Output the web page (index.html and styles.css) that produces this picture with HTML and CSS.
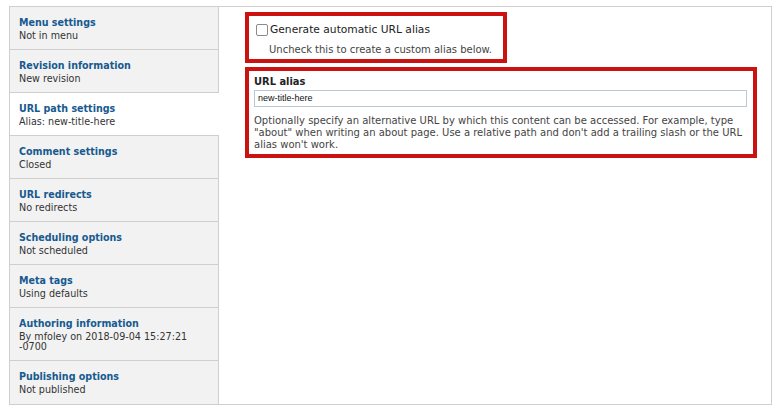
FILE: index.html
```html
<!DOCTYPE html>
<html>
<head>
<meta charset="utf-8">
<link rel="stylesheet" href="styles.css">
</head>
<body>
<div class="frame">
  <ul class="tabs">
    <li class="tab"><span class="tab-title">Menu settings</span><span class="tab-sum">Not in menu</span></li>
    <li class="tab"><span class="tab-title">Revision information</span><span class="tab-sum">New revision</span></li>
    <li class="tab active"><span class="tab-title">URL path settings</span><span class="tab-sum">Alias: new-title-here</span></li>
    <li class="tab"><span class="tab-title">Comment settings</span><span class="tab-sum">Closed</span></li>
    <li class="tab"><span class="tab-title">URL redirects</span><span class="tab-sum">No redirects</span></li>
    <li class="tab"><span class="tab-title">Scheduling options</span><span class="tab-sum">Not scheduled</span></li>
    <li class="tab"><span class="tab-title">Meta tags</span><span class="tab-sum">Using defaults</span></li>
    <li class="tab tall"><span class="tab-title">Authoring information</span><span class="tab-sum">By mfoley on 2018-09-04 15:27:21 -0700</span></li>
    <li class="tab last"><span class="tab-title">Publishing options</span><span class="tab-sum">Not published</span></li>
  </ul>
  <div class="pane">
    <div class="box box-auto">
      <label class="check"><span class="checkbox"></span>Generate automatic URL alias</label>
      <div class="desc indent">Uncheck this to create a custom alias below.</div>
    </div>
    <div class="box box-alias">
      <div class="field-label">URL alias</div>
      <div class="input">new-title-here</div>
      <div class="desc help">Optionally specify an alternative URL by which this content can be accessed. For example, type "about" when writing an about page. Use a relative path and don't add a trailing slash or the URL alias won't work.</div>
    </div>
  </div>
</div>
</body>
</html>
```

FILE: styles.css
```css
html, body {
  margin: 0;
  padding: 0;
  background: #fff;
}
body {
  font-family: "DejaVu Sans", Verdana, sans-serif;
  font-size: 10px;
  color: #333;
}
.frame {
  display: flex;
  margin: 6px 0 0 9px;
  width: 761px;
  height: 397px;
  border: 1px solid #cfcfcf;
}
.tabs {
  list-style: none;
  margin: 0;
  padding: 0;
  width: 209px;
  background: #f2f2f2;
  border-right: 1px solid #cfcfcf;
  display: flex;
  flex-direction: column;
}
.tab {
  border-bottom: 1px solid #cfcfcf;
  padding: 9px 0 0 9px;
  box-sizing: content-box;
  height: 33px;
  display: flex;
  flex-direction: column;
}
.tab.tall {
  height: 43px;
}
.tab.last {
  border-bottom: none;
  flex: 1;
}
.tab.active {
  background: #fff;
  margin-right: -1px;
}
.tab-title {
  color: #175a8f;
  font-family: "DejaVu Sans Condensed", "DejaVu Sans", sans-serif;
  font-stretch: condensed;
  font-weight: bold;
  font-size: 10.6px;
  line-height: 13px;
}
.tab-sum {
  color: #333;
  font-size: 9.6px;
  line-height: 9.5px;
  margin-top: 2px;
  padding-right: 20px;
}
.pane {
  flex: 1;
  padding: 5px 14px 0 26px;
  display: flex;
  flex-direction: column;
  align-items: flex-start;
  gap: 4px;
}
.box {
  border: 4px solid #cc1111;
  box-sizing: border-box;
}
.box-auto {
  width: 262px;
  height: 51px;
  padding: 7px 0 0 7px;
}
.box-alias {
  width: 512px;
  height: 91px;
  padding: 4px 6px 0 5px;
}
.check {
  display: flex;
  align-items: center;
  font-size: 10.7px;
  color: #222;
  line-height: 13px;
}
.checkbox {
  width: 10px;
  height: 10px;
  border: 1px solid #8a8a8a;
  border-radius: 2px;
  background: #fff;
  margin-right: 2px;
}
.desc {
  font-size: 10px;
  line-height: 12px;
  color: #444;
}
.indent {
  margin: 8px 0 0 13px;
}
.field-label {
  font-weight: bold;
  font-family: "DejaVu Sans Condensed", "DejaVu Sans", sans-serif;
  font-stretch: condensed;
  font-size: 11px;
  color: #222;
  line-height: 13px;
}
.input {
  margin-top: 2px;
  height: 15px;
  border: 1px solid #b8c8d6;
  font-family: "Liberation Sans", Arial, sans-serif;
  font-size: 9px;
  line-height: 15px;
  padding-left: 3px;
  color: #111;
}
.help {
  margin-top: 8px;
}
```
